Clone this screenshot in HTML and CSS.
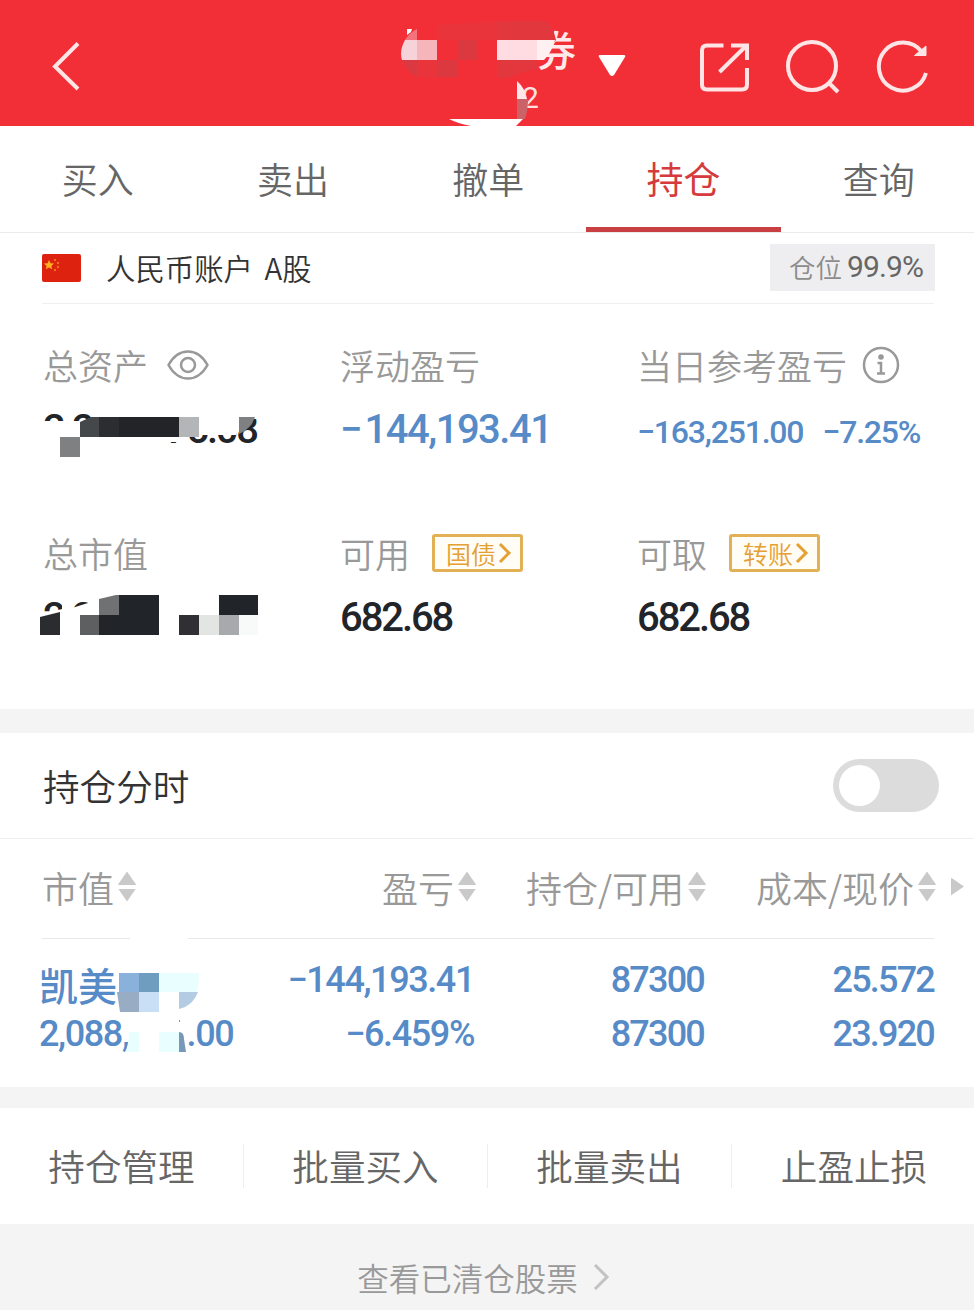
FILE: index.html
```
<!DOCTYPE html>
<html lang="zh-CN">
<head>
  <meta charset="UTF-8" />
  <meta name="viewport" content="width=device-width, initial-scale=1.0"/>
  <title>持仓</title>
  <link rel="stylesheet" href="styles.css">
</head>
<body>

<header class="topbar">
  <svg class="back" width="32" height="52" viewBox="0 0 32 52"><path d="M28 3.500 5 26.500 28 49"/></svg>
  <div class="broker">
    <svg width="190" height="126" viewBox="400 0 190 126">
      <text x="535" y="66" class="broker-name">券</text>
      <text x="522" y="108" class="broker-no">2</text>
      <path fill="#f22f37" d="M530 25h22l4 15-12 14h-14V25z"/>
      <path fill="#e2393f" d="M437 25 497 21v19h-60zM400 60h37v18q-28 2-37-18z" opacity=".6"/>
      <path fill="#e2373d" d="M497 21h50q7 8 8 19h-58zM497 60h40v9q-10 2-19 5l-11 4h-10z"/>
      <path fill="#d63b42" d="M457 40h20v20h-20zM437 60h20v17h-20zM403 60h14v18q-10-7-14-18z" opacity=".8"/>
      <path fill="#f4727b" d="M417 29v11h-12q4-7 12-11z"/>
      <path fill="#fff" d="M407 29h5l-1 3-4 3z"/>
      <path fill="#f6d3d8" d="M405 40h12v20h-15q-3-9 3-20z"/>
      <path fill="#f6b5bb" d="M417 40h20v20h-20z"/>
      <path fill="#ffdce1" d="M497 40h40v20h-40z"/>
      <path fill="#fff0f2" d="M537 40h18q-3 12-11 20h-7z"/>
      <path fill="#ffe7ea" d="M517 81q8 7 10 18h-10z"/>
      <path fill="#cb6268" d="M517 99h11q0 11-3 20h-8z"/>
      <path fill="#fff" d="M449 119h74l-7 7h-45q-12-2-22-7z"/>
    </svg>
  </div>
  <svg class="caret" width="28" height="24" viewBox="0 0 28 24"><path d="M2 1h24q2 0 1 2L16 21q-2 2-4 0L1 3Q0 1 2 1z"/></svg>
  <div class="tools">
    <svg width="52" height="52" viewBox="0 0 52 52"><path d="M25.500 4.500H9q-5 0-5 5v34q0 5 5 5h35q5 0 5-5V27M21.500 31 47 6"/><path d="M33 4.500h16V19"/></svg>
    <svg width="54" height="54" viewBox="0 0 54 54"><circle cx="26" cy="26" r="24"/><path d="m43 43 9 9"/></svg>
    <svg width="52" height="54" viewBox="0 0 52 54"><path d="M50 33A24 24 0 1 1 46 12"/><path class="solid" d="M38.500 15.500 50 6v9.500z"/></svg>
  </div>
</header>

<nav class="tabs">
  <a class="tab">买入</a>
  <a class="tab">卖出</a>
  <a class="tab">撤单</a>
  <a class="tab active">持仓</a>
  <a class="tab">查询</a>
</nav>

<section class="account">
  <svg class="flag" width="40" height="28" viewBox="0 0 40 28">
    <rect width="39" height="28" rx="2" fill="#de2210"/>
    <path fill="#ffb21e" d="m7 6 1.500 3.200 3.500.3-2.600 2.400.8 3.400L7 13.500l-3.200 1.800.8-3.400L2 9.500l3.500-.3z"/>
    <g fill="#f0701c"><circle cx="13" cy="6" r="1.200"/><circle cx="16" cy="9" r="1.200"/><circle cx="16" cy="13" r="1.200"/><circle cx="13" cy="16" r="1.200"/></g>
  </svg>
  <span class="account-name">人民币账户 A股</span>
  <span class="position">仓位 <b>99.9%</b></span>
</section>

<section class="summary">
  <div class="cell">
    <div class="label">总资产
      <svg class="eye" width="42" height="30" viewBox="0 0 42 30"><path d="M1.500 15Q9 1.500 21 1.500T40.500 15Q33 28.500 21 28.500T1.500 15z"/><circle cx="21" cy="15" r="7"/></svg>
    </div>
    <svg class="masked" width="220" height="46" viewBox="40 407 220 46">
      <text x="43" y="443">2</text>
      <text x="72" y="443">2</text>
      <text x="166" y="443" textLength="91">75.08</text>
      <path fill="#fff" d="M40 421h60v27H40zM164 407h75v22l-3 6h-52v7h-20z"/>
      <path fill="#fff" d="M236 407h24v12h-24z"/>
      <path fill="#45484b" d="M80 422l11-5h8v20H80z"/>
      <path fill="#2c2d31" d="M99 417h20v20H99z"/>
      <path fill="#222428" d="M119 417h60v20h-60z"/>
      <path fill="#b4b5b7" d="M179 417h20v20h-20z"/>
      <path fill="#7f8082" d="M60 437h20v20H60zM239 417h16q-4 12-16 17z"/>
    </svg>
  </div>
  <div class="cell">
    <div class="label">浮动盈亏</div>
    <div class="value down">−144,193.41</div>
  </div>
  <div class="cell">
    <div class="label">当日参考盈亏
      <svg class="info" width="38" height="38" viewBox="0 0 38 38"><circle cx="19" cy="19" r="17"/><path d="M15.500 17H19v10M15 27.500h8"/><circle class="dot" cx="19" cy="11" r="2.800"/></svg>
    </div>
    <div class="value down small"><span>−163,251.00</span><span>−7.25%</span></div>
  </div>
  <div class="cell">
    <div class="label">总市值</div>
    <svg class="masked" width="220" height="46" viewBox="40 595 220 46">
      <text x="43" y="631">2</text>
      <text x="72" y="631">2</text>
      <path fill="#fff" d="M62 595h10v46H62zM72 608l16-5 12-3v41H72z"/>
      <path fill="#fff" d="M40 615l22-6v32H40z"/>
      <path fill="#2a2c30" d="M40 617l20-5v23H40z"/>
      <path fill="#707173" d="M99 599l17-4h3v20H99z"/>
      <path fill="#5e5f61" d="M80 615h19v20H80z"/>
      <path fill="#212428" d="M119 595h40v40H99v-20h20zM219 595h39v20h-39z"/>
      <path fill="#2f2f34" d="M179 615h20v20h-20z"/>
      <path fill="#e3e5e2" d="M199 615h20v20h-20z"/>
      <path fill="#a8a9ad" d="M219 615h20v20h-20z"/>
      <path fill="#f8faf9" d="M239 615h19v20h-19z"/>
    </svg>
  </div>
  <div class="cell">
    <div class="label">可用
      <button class="tag">国债<svg width="14" height="22" viewBox="0 0 14 22"><path d="m2 2 9 9-9 9"/></svg></button>
    </div>
    <div class="value">682.68</div>
  </div>
  <div class="cell">
    <div class="label">可取
      <button class="tag">转账<svg width="14" height="22" viewBox="0 0 14 22"><path d="m2 2 9 9-9 9"/></svg></button>
    </div>
    <div class="value">682.68</div>
  </div>
</section>

<section class="chart-toggle">
  <span>持仓分时</span>
  <div class="switch"><i></i></div>
</section>

<section class="holdings">
  <div class="row head">
    <span>市值<i class="sort"></i></span>
    <span>盈亏<i class="sort"></i></span>
    <span>持仓/可用<i class="sort"></i></span>
    <span>成本/现价<i class="sort"></i></span>
    <i class="more"></i>
  </div>
  <div class="row stock">
    <div class="stock-name">
      <p class="name">凯美</p>
      <p class="amount"><span>2,088,</span><span>.00</span></p>
      <svg class="mosaic" width="90" height="122" viewBox="116 933 90 122">
        <path fill="#fff" d="M130 936h58v5h-58z"/>
        <path fill="#8ab0dc" d="M119 973h20v19h-20z"/>
        <path fill="#6e9dc0" d="M139 973h20v19h-20z"/>
        <path fill="#e8feff" d="M159 973h40q0 10-2 19h-38zM129 1032h10v20h-14q4-8 4-20zM159 1032h20v20h-20z"/>
        <path fill="#98adc4" d="M117 992h22v20h-19z"/>
        <path fill="#c9dff6" d="M139 992h20v20h-20z"/>
        <path fill="#b3cce4" d="M179 992h19q-5 14-19 17z"/>
        <path fill="#7898b9" d="M179 1032q5 0 5 7l2 13h-7zM179 1020h1v2h-1z"/>
      </svg>
    </div>
    <div><p>−144,193.41</p><p>−6.459%</p></div>
    <div class="narrow"><p>87300</p><p>87300</p></div>
    <div class="narrow"><p>25.572</p><p>23.920</p></div>
  </div>
</section>

<nav class="actions">
  <a>持仓管理</a>
  <a>批量买入</a>
  <a>批量卖出</a>
  <a>止盈止损</a>
</nav>

<footer class="cleared">查看已清仓股票
  <svg width="18" height="30" viewBox="0 0 18 30"><path d="m3 3 12 12L3 27"/></svg>
</footer>

</body>
</html>
```
FILE: styles.css
```
* {
  box-sizing: border-box;
}

body {
  margin: 0;
  width: 974px;
  height: 1310px;
  overflow: hidden;
  background: #f4f4f4;
  color: #333;
  font-family: 'Noto Sans CJK SC', sans-serif;
  font-weight: 350;
}

p {
  margin: 0;
}

svg {
  display: block;
  fill: none;
  flex-shrink: 0;
}

/* Header */
.topbar {
  display: flex;
  align-items: center;
  height: 126px;
  padding: 0 46px 0 50px;
  background: #f22f37;
}

.topbar svg {
  stroke: #ffe4e6;
  stroke-width: 4;
}

.back {
  margin-top: 6px;
}

.broker {
  margin-left: 318px;
}

.topbar .broker svg,
.topbar .caret {
  stroke: none;
}

.broker-name {
  fill: #ffe9ea;
  font-size: 41px;
  font-weight: 500;
}

.broker-no {
  fill: #ffe0e2;
  font: 400 30px Roboto, sans-serif;
}

.caret {
  margin: 6px 0 0 8px;
  fill: #fff;
}

.tools {
  display: flex;
  align-items: center;
  margin: 8px 0 0 auto;
  gap: 36px;
}

.topbar .solid {
  fill: #ffe4e6;
  stroke-width: 1;
}

/* Tabs */
.tabs {
  display: flex;
  height: 107px;
  background: #fff;
  border-bottom: 1px solid #ebebeb;
}

.tab {
  flex: 0 0 195.300px;
  height: 106px;
  line-height: 104px;
  text-align: center;
  font-size: 36px;
  color: #666;
}

.tab.active {
  color: #d63a3c;
  font-weight: 400;
  font-size: 37px;
  border-bottom: 5px solid #c94042;
}

/* Account */
.account {
  display: flex;
  align-items: center;
  height: 71px;
  padding: 0 39px 0 42px;
  background: linear-gradient(#f0f0f0, #f0f0f0) 42px 100% / 892px 1px no-repeat #fff;
}

.flag {
  margin-top: -2px;
}

.account-name {
  margin: -3px 0 0 24px;
  font-size: 29.400px;
  word-spacing: 5px;
}

.position {
  display: flex;
  align-items: center;
  gap: 5px;
  height: 47px;
  margin: -2px 0 0 auto;
  padding: 0 12px 3px 19px;
  background: #eeeef0;
  color: #8c8c8c;
  font-size: 26.500px;
}

.position b {
  color: #666;
  font: 400 30px Roboto, sans-serif;
  letter-spacing: -.9px;
}

/* Summary */
.summary {
  display: grid;
  grid-template-columns: 297px 297px 1fr;
  grid-auto-rows: 108px;
  row-gap: 80px;
  height: 405px;
  padding: 41px 0 0 43px;
  background: #fff;
}

.label {
  display: flex;
  align-items: center;
  height: 40px;
  margin-bottom: 22px;
  font-size: 35px;
  line-height: 38px;
  color: #999;
}

.value,
.masked text {
  font: 500 40px/46px Roboto, sans-serif;
  letter-spacing: -2.100px;
  color: #212429;
  fill: #212429;
}

.value.down {
  color: #568bc8;
  letter-spacing: -1.500px;
}

.value.down::first-letter {
  letter-spacing: 2px;
}

.value.small {
  display: flex;
  gap: 19px;
  font-size: 32px;
  line-height: 50px;
}

.value.down.small {
  letter-spacing: -1.200px;
}

.masked {
  margin-left: -3px;
  overflow: visible;
}

.eye,
.info {
  stroke: #999;
  stroke-width: 2.500;
}

.eye {
  margin-left: 19px;
}

.info {
  margin-left: 15px;
}

.info .dot {
  fill: #999;
  stroke: none;
}

.tag {
  display: flex;
  align-items: center;
  gap: 2px;
  width: 91px;
  height: 38px;
  margin: -1px 0 0 22px;
  padding: 0 0 0 11px;
  border: 3px solid #e2b055;
  border-radius: 3px;
  background: #fffdf5;
  color: #e5a033;
  font: 350 25px/30px 'Noto Sans CJK SC', sans-serif;
}

.tag svg {
  stroke: #e5a033;
  stroke-width: 3;
}

/* Intraday chart switch */
.chart-toggle {
  display: flex;
  align-items: center;
  justify-content: space-between;
  height: 106px;
  margin-top: 24px;
  padding: 0 35px 0 43px;
  background: #fff;
  border-bottom: 1px solid #efefef;
  font-size: 36.600px;
}

.switch {
  width: 106px;
  height: 53px;
  padding: 6px;
  border-radius: 27px;
  background: #dcdcdc;
}

.switch i {
  display: block;
  width: 41px;
  height: 41px;
  border-radius: 50%;
  background: #fff;
}

/* Holdings table */
.holdings {
  background: #fff;
}

.row {
  display: grid;
  grid-template-columns: 204px 230px 230px 230px 1fr;
  padding-left: 42px;
  text-align: right;
}

.head {
  height: 100px;
  padding-bottom: 5px;
  align-items: center;
  background: linear-gradient(#e8e8e8, #e8e8e8) 42px 100% / 892px 1px no-repeat;
  color: #999;
  font-size: 36px;
}

.head span {
  display: flex;
  align-items: center;
  justify-content: flex-end;
}

.head span:first-child {
  justify-content: flex-start;
}

.sort {
  width: 18px;
  height: 30px;
  margin-left: 4px;
  background: linear-gradient(#c9c9c9 13px, transparent 13px, transparent 17px, #c9c9c9 17px);
  clip-path: polygon(50% 0, 100% 43%, 100% 57%, 50% 100%, 0 57%, 0 43%);
}

.more {
  width: 13px;
  height: 18px;
  margin-left: 15px;
  background: #c9c9c9;
  clip-path: polygon(0 0, 100% 50%, 0 100%);
}

.stock {
  height: 148px;
  padding-top: 14px;
  color: #568bc8;
  font: 500 36px/54px Roboto, sans-serif;
  letter-spacing: -1.400px;
}

.stock > div {
  padding-right: 2px;
}

.stock .narrow {
  letter-spacing: -1.800px;
}

.stock .stock-name {
  position: relative;
  margin-left: -3px;
  text-align: left;
}

.stock .name {
  font: 500 39px/62px 'Noto Sans CJK SC', sans-serif;
  letter-spacing: 0;
  height: 54px;
}

.amount {
  display: flex;
  gap: 58px;
}

.mosaic {
  position: absolute;
  left: 77px;
  top: -20px;
}

/* Bottom actions */
.actions {
  display: flex;
  align-items: center;
  height: 116px;
  margin-top: 21px;
  background: #fff;
}

.actions a {
  flex: 0 0 244px;
  height: 44px;
  line-height: 44px;
  text-align: center;
  font-size: 36.600px;
  color: #666;
  border-right: 1px solid #eee;
}

.actions a:last-child {
  border-right: 0;
}

.cleared {
  display: flex;
  align-items: center;
  justify-content: center;
  gap: 14px;
  height: 106px;
  padding-right: 7px;
  font-size: 31.500px;
  color: #999;
}

.cleared svg {
  stroke: #c2c2c2;
  stroke-width: 3;
}
```
